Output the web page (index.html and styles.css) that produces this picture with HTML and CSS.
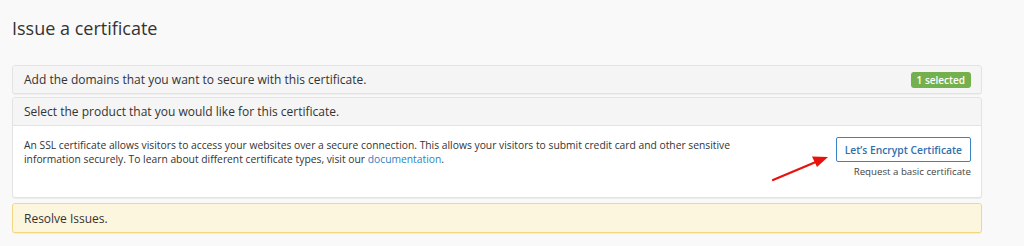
FILE: index.html
```html
<!DOCTYPE html>
<html>
<head>
<meta charset="utf-8">
<link rel="stylesheet" href="styles.css">
</head>
<body>
<div class="page">
  <h1 class="title">Issue a certificate</h1>
  <div class="panel">
    <div class="panel-heading">
      <span>Add the domains that you want to secure with this certificate.</span>
      <span class="badge">1 selected</span>
    </div>
  </div>
  <div class="panel">
    <div class="panel-heading with-body">
      <span>Select the product that you would like for this certificate.</span>
    </div>
    <div class="panel-body">
      <p class="desc">An SSL certificate allows visitors to access your websites over a secure connection. This allows your visitors to submit credit card and other sensitive information securely. To learn about different certificate types, visit our <a href="#">documentation</a>.</p>
      <div class="product">
        <button class="btn">Let’s Encrypt Certificate</button>
        <span class="hint">Request a basic certificate</span>
      </div>
      <svg class="arrow" width="70" height="34" viewBox="0 0 70 34">
        <line x1="3" y1="31" x2="47" y2="12.5" stroke="#e8120c" stroke-width="2.2" stroke-linecap="round"/>
        <polygon points="58,8 42,7.5 47,18" fill="#e8120c"/>
      </svg>
    </div>
  </div>
  <div class="panel warning">
    <div class="panel-heading">Resolve Issues.</div>
  </div>
</div>
</body>
</html>
```
FILE: styles.css
```css
html, body {
  margin: 0;
  padding: 0;
  background: #f9f9f9;
}
body {
  font-family: "Open Sans", "Liberation Sans", sans-serif;
  color: #333;
}
.page {
  width: 970px;
  padding: 0 12px;
}
.title {
  margin: 0;
  padding-top: 15px;
  height: 65px;
  box-sizing: border-box;
  font-size: 18px;
  font-weight: 400;
  line-height: 26px;
  color: #333;
}
.panel {
  background: #fff;
  border: 1px solid #e3e3e3;
  border-radius: 3px;
  box-shadow: 0 1px 1px rgba(0,0,0,0.05);
  margin-bottom: 3px;
}
.panel-heading {
  background: #f5f5f5;
  height: 27px;
  padding: 0 10px 0 11px;
  display: flex;
  align-items: center;
  justify-content: space-between;
  font-size: 12px;
  color: #333;
  border-radius: 3px;
}
.panel-heading.with-body {
  border-bottom: 1px solid #e3e3e3;
  border-radius: 3px 3px 0 0;
}
.badge {
  background: #74b14e;
  color: #fff;
  font-size: 10px;
  font-weight: 600;
  padding: 0 6px;
  height: 16px;
  line-height: 16px;
  border-radius: 3px;
}
.panel-body {
  position: relative;
  display: flex;
  justify-content: space-between;
  padding: 11px 10px 0 11px;
  height: 60px;
}
.desc {
  margin: 1px 0 0;
  width: 730px;
  font-size: 10.3px;
  line-height: 14px;
  color: #333;
}
.desc a {
  color: #2f7fc1;
  text-decoration: none;
}
.product {
  display: flex;
  flex-direction: column;
  align-items: flex-end;
  gap: 3px;
}
.btn {
  font-family: inherit;
  background: #fff;
  border: 1px solid #3a83c5;
  color: #2f6fae;
  font-size: 10.3px;
  font-weight: 600;
  height: 25px;
  padding: 0 8px;
  border-radius: 2px;
}
.hint {
  font-size: 9.7px;
  color: #444;
}
.arrow {
  position: absolute;
  left: 757px;
  top: 23px;
}
.warning {
  background: #fdf6de;
  border-color: #f2d77c;
  margin-top: 5px;
}
.warning .panel-heading {
  background: #fdf6de;
  height: 28px;
  color: #333;
}
```
